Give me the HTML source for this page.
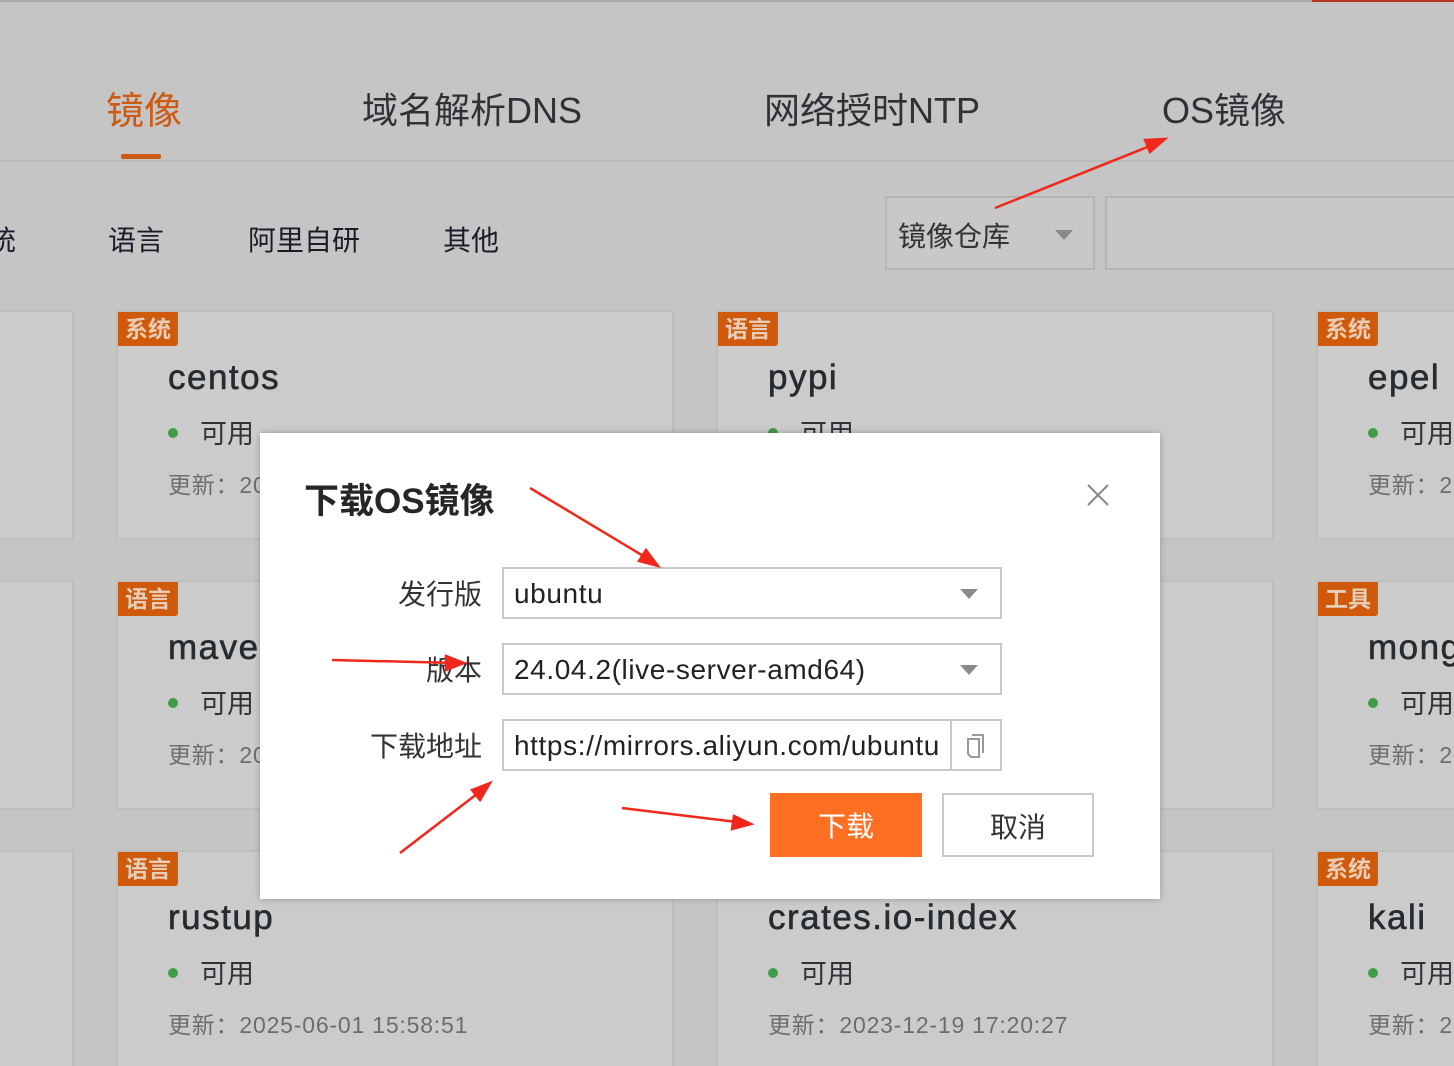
<!DOCTYPE html>
<html><head><meta charset="utf-8">
<style>
*{margin:0;padding:0;box-sizing:border-box}
html{overflow:hidden}
body{width:1454px;height:1066px;overflow:hidden;background:#c5c5c5;position:relative;font-family:"Liberation Sans","Noto Sans CJK SC",sans-serif;color:#2b2f33}
.a{position:absolute;white-space:nowrap}
.card{position:absolute;background:#cbcbcb;border:2px solid #bebebe;width:558px;height:230px;overflow:hidden;white-space:nowrap}
.tag{position:absolute;left:0;top:0;width:60px;height:34px;background:#cf5a0b;color:#e8cdb9;font-size:23px;font-weight:bold;line-height:34px;text-align:center;border-radius:0 0 3px 0}
.t{position:absolute;left:50px;top:46px;font-size:35px;color:#272c30;letter-spacing:1.5px;-webkit-text-stroke:0.6px #272c30}
.s{position:absolute;left:50px;top:100px;font-size:27px;color:#303438}
.s:before{content:"";display:inline-block;width:10px;height:10px;border-radius:50%;background:#3f9d4a;margin:0 22px 5px 0;vertical-align:middle}
.u{position:absolute;left:50px;top:154px;font-size:23px;color:#6b6d70;letter-spacing:0.8px}
.box{position:absolute;background:#fff;border:2px solid #c9c9c9;font-size:28px;color:#222;padding-left:10px;line-height:52px;letter-spacing:0.6px;white-space:nowrap}
.tri{position:absolute;right:22px;top:20px;width:0;height:0;border-left:9px solid transparent;border-right:9px solid transparent;border-top:10px solid #8a8a8a}
.lbl{position:absolute;font-size:28px;color:#333;text-align:right;width:200px}
</style></head><body>
<div class="a" style="left:0;top:0;width:1454px;height:2px;background:#a9a9a9"></div>
<div class="a" style="left:1312px;top:0;width:142px;height:2px;background:#b8341f"></div>
<div class="a" style="left:106px;top:80px;font-size:38px;color:#cd5b12">镜像</div>
<div class="a" style="left:121px;top:154px;width:40px;height:5px;background:#cd5b12;border-radius:2px"></div>
<div class="a" style="left:362px;top:82px;font-size:36px;color:#2e3236">域名解析DNS</div>
<div class="a" style="left:764px;top:82px;font-size:36px;color:#2e3236">网络授时NTP</div>
<div class="a" style="left:1162px;top:82px;font-size:36px;color:#2e3236">OS镜像</div>
<div class="a" style="left:0;top:160px;width:1454px;height:2px;background:#b9b9b9"></div>
<div class="a" style="left:-12px;top:219px;font-size:28px;color:#1e1a28">统</div>
<div class="a" style="left:108px;top:219px;font-size:28px;color:#1e1a28">语言</div>
<div class="a" style="left:248px;top:219px;font-size:28px;color:#1e1a28">阿里自研</div>
<div class="a" style="left:443px;top:219px;font-size:28px;color:#1e1a28">其他</div>
<div class="a" style="left:885px;top:196px;width:210px;height:74px;border:2px solid #b5b5b5;background:#c8c8c8"><span class="a" style="left:11px;top:17px;font-size:28px;color:#333">镜像仓库</span><div class="tri" style="right:20px;top:32px"></div></div>
<div class="a" style="left:1105px;top:196px;width:349px;height:74px;border:2px solid #b5b5b5;border-right:none;background:#c8c8c8"></div>

<div class="card" style="left:-484px;top:310px"></div>
<div class="card" style="left:116px;top:310px"><div class="tag">系统</div><div class="t">centos</div><div class="s">可用</div><div class="u">更新：2025-06-01 15:58:51</div></div>
<div class="card" style="left:716px;top:310px"><div class="tag">语言</div><div class="t">pypi</div><div class="s">可用</div><div class="u">更新：2025-06-01 15:58:51</div></div>
<div class="card" style="left:1316px;top:310px;width:138px;border-right:none"><div class="tag">系统</div><div class="t">epel</div><div class="s">可用</div><div class="u">更新：2025-06-01</div></div>
<div class="card" style="left:-484px;top:580px"></div>
<div class="card" style="left:116px;top:580px"><div class="tag">语言</div><div class="t">maven</div><div class="s">可用</div><div class="u">更新：2025-06-01 15:58:51</div></div>
<div class="card" style="left:716px;top:580px"><div class="tag">语言</div><div class="t">npm</div><div class="s">可用</div><div class="u">更新：2025-06-01 15:58:51</div></div>
<div class="card" style="left:1316px;top:580px;width:138px;border-right:none"><div class="tag">工具</div><div class="t">mongodb</div><div class="s">可用</div><div class="u">更新：2025-06-01</div></div>
<div class="card" style="left:-484px;top:850px"></div>
<div class="card" style="left:116px;top:850px"><div class="tag">语言</div><div class="t">rustup</div><div class="s">可用</div><div class="u">更新：2025-06-01 15:58:51</div></div>
<div class="card" style="left:716px;top:850px"><div class="t">crates.io-index</div><div class="s">可用</div><div class="u">更新：2023-12-19 17:20:27</div></div>
<div class="card" style="left:1316px;top:850px;width:138px;border-right:none"><div class="tag">系统</div><div class="t">kali</div><div class="s">可用</div><div class="u">更新：2025-06-01</div></div>

<div class="a" style="left:260px;top:433px;width:900px;height:466px;background:#fff;box-shadow:0 0 6px rgba(0,0,0,.25)">
  <div class="a" style="left:44px;top:40px;font-size:35px;font-weight:bold;color:#262626">下载OS镜像</div>
  <svg class="a" style="left:826px;top:50px" width="24" height="24"><path d="M2 2L22 22M22 2L2 22" stroke="#888" stroke-width="2"/></svg>
  <div class="lbl" style="left:22px;top:140px">发行版</div>
  <div class="box" style="left:242px;top:134px;width:500px;height:52px;line-height:50px">ubuntu<div class="tri"></div></div>
  <div class="lbl" style="left:22px;top:216px">版本</div>
  <div class="box" style="left:242px;top:210px;width:500px;height:52px;line-height:50px">24.04.2(live-server-amd64)<div class="tri"></div></div>
  <div class="lbl" style="left:22px;top:292px">下载地址</div>
  <div class="box" style="left:242px;top:286px;width:500px;height:52px;line-height:50px;overflow:hidden">https://mirrors.aliyun.com/ubuntu
    <div class="a" style="left:446px;top:0;width:50px;height:48px;background:#fff;border-left:2px solid #c9c9c9">
      <svg class="a" style="left:12px;top:10px" width="26" height="28"><path d="M8 4H19V22" stroke="#999" stroke-width="2" fill="none"/><path d="M4 8H15V26H7L4 23Z" stroke="#999" stroke-width="2" fill="none"/></svg>
    </div>
  </div>
  <div class="a" style="left:510px;top:360px;width:152px;height:64px;background:#fe6f22;color:#fff;font-size:28px;text-align:center;line-height:68px">下载</div>
  <div class="a" style="left:682px;top:360px;width:152px;height:64px;border:2px solid #c9c9c9;color:#333;font-size:28px;text-align:center;line-height:66px">取消</div>
</div>

<svg class="a" style="left:0;top:0" width="1454" height="1066">
<g stroke="#f0281c" stroke-width="2.5" fill="none">
<path d="M995 208L1160 142"/><path d="M1165 139L1145 140L1150 152Z" fill="#f0281c"/>
<path d="M530 488L655 563"/><path d="M658 566L646 550L639 561Z" fill="#f0281c"/>
<path d="M332 660L458 663"/><path d="M464 663L446 656L446 670Z" fill="#f0281c"/>
<path d="M400 853L486 787"/><path d="M490 783L472 790L480 800Z" fill="#f0281c"/>
<path d="M622 808L745 823"/><path d="M751 824L734 816L732 829Z" fill="#f0281c"/>
</g></svg>
</body></html>
